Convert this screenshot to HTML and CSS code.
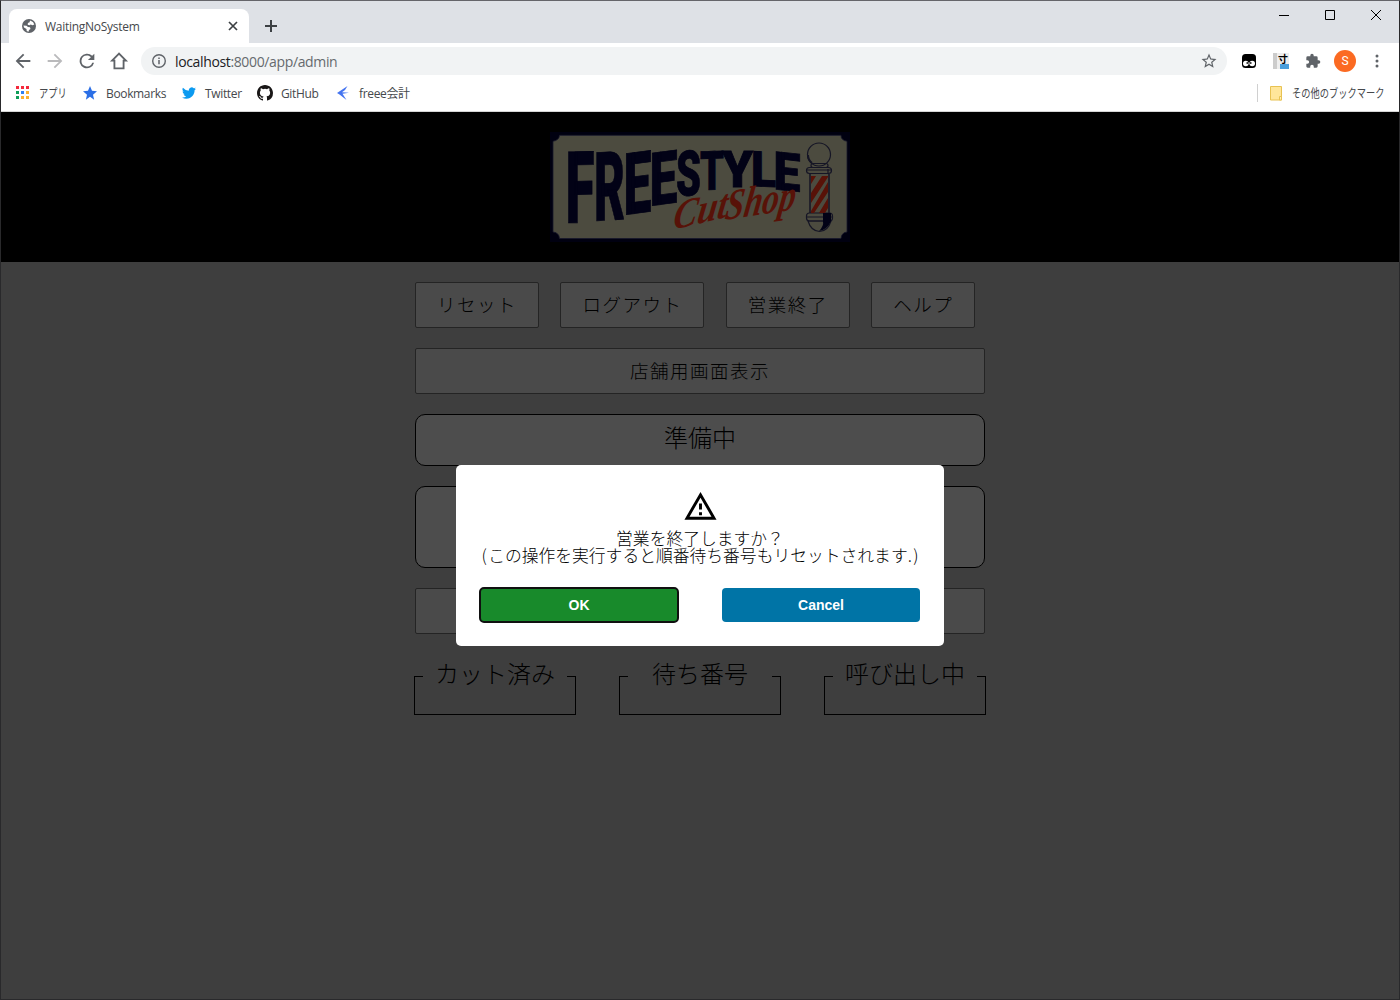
FILE: index.html
```html
<!DOCTYPE html>
<html lang="ja">
<head>
<meta charset="utf-8">
<title>WaitingNoSystem</title>
<link rel="stylesheet" href="styles.css">
</head>
<body>
<div class="window">
  <header class="titlebar">
    <div class="tab">
      <svg class="tab-icon" width="16" height="16" viewBox="0 0 16 16"><circle cx="8" cy="8" r="7" fill="#5f6368"/><path fill="#fff" d="M2.500 7.500l3 .3 1.500 1.200 2 .2.500 1.800-1.500 1-.5 1.700-1.800-.6L5.500 11 3 9.500zM9 2.500l3 1.500 1.300 2.500-1.800.8-1.800-.8-1.200.8-1.800-.5.200-1.800 1.700-.8z"/></svg>
      <span class="tab-title">WaitingNoSystem</span>
      <svg class="tab-close" width="10" height="10" viewBox="0 0 10 10"><path d="M1 1l8 8M9 1l-8 8" stroke="#3c4043" stroke-width="1.700"/></svg>
    </div>
    <svg class="new-tab" width="12" height="12" viewBox="0 0 12 12"><path d="M6 0v12M0 6h12" stroke="#3c4043" stroke-width="2"/></svg>
    <div class="window-controls">
      <svg width="11" height="11" viewBox="0 0 11 11"><path d="M0 5.500h10" stroke="#000"/></svg>
      <svg width="11" height="11" viewBox="0 0 11 11"><path d="M.5.500h9v9h-9z" fill="none" stroke="#000"/></svg>
      <svg width="11" height="11" viewBox="0 0 11 11"><path d="M0 0l10 10M10 0L0 10" stroke="#000"/></svg>
    </div>
  </header>

  <nav class="toolbar">
    <svg width="22" height="22" viewBox="0 0 24 24"><path fill="#5f6368" d="M20 11H7.830l5.590-5.590L12 4l-8 8 8 8 1.410-1.410L7.830 13H20z"/></svg>
    <svg width="22" height="22" viewBox="0 0 24 24"><path fill="#bababc" d="M12 4l-1.410 1.410L16.170 11H4v2h12.170l-5.580 5.590L12 20l8-8z"/></svg>
    <svg width="22" height="22" viewBox="0 0 24 24"><path fill="#5f6368" d="M17.650 6.350A8 8 0 1 0 19.730 14h-2.080A6 6 0 1 1 12 6c1.660 0 3.140.69 4.220 1.780L13 11h7V4z"/></svg>
    <svg width="22" height="22" viewBox="0 0 24 24"><path fill="none" stroke="#5f6368" stroke-width="2" d="M12 4l-7.500 7.500H7V20h10v-8.500h2.500z"/></svg>
    <div class="address">
      <svg width="16" height="16" viewBox="0 0 16 16"><circle cx="8" cy="8" r="6.300" fill="none" stroke="#5f6368" stroke-width="1.400"/><path d="M8 7v4.200M8 4.500v1.600" stroke="#5f6368" stroke-width="1.500"/></svg>
      <span class="url"><b>localhost</b>:8000/app/admin</span>
      <svg class="star" width="18" height="18" viewBox="0 0 24 24"><path fill="#5f6368" d="M22 9.240l-7.190-.62L12 2 9.190 8.630 2 9.240l5.460 4.730L5.820 21 12 17.270 18.180 21l-1.630-7.030zM12 15.400l-3.760 2.270 1-4.280-3.320-2.880 4.380-.38L12 6.100l1.710 4.040 4.380.38-3.320 2.880 1 4.280z"/></svg>
    </div>
    <div class="extensions">
      <svg width="16" height="16" viewBox="0 0 16 16"><rect x="1" y="1" width="14" height="14" rx="3.500" fill="#000"/><circle cx="4.800" cy="10.500" r="2.800" fill="#fff"/><circle cx="11.200" cy="10.500" r="2.800" fill="#fff"/><path d="M5.500 10h1.500M9 10h1.500" stroke="#000" stroke-width="1.500"/></svg>
      <span class="size-ext"><span class="size-glyph">寸</span></span>
      <svg width="16" height="16" viewBox="0 0 24 24"><path fill="#5f6368" d="M20.500 11H19V7a2 2 0 0 0-2-2h-4V3.500a2.500 2.500 0 0 0-5 0V5H4a2 2 0 0 0-2 2v3.800h1.500a2.700 2.700 0 0 1 0 5.400H2V20c0 1.100.9 2 2 2h3.800v-1.500a2.700 2.700 0 0 1 5.400 0V22H17a2 2 0 0 0 2-2v-4h1.500a2.500 2.500 0 0 0 0-5z"/></svg>
    </div>
    <span class="avatar">S</span>
    <svg class="kebab" width="4" height="14" viewBox="0 0 4 14"><g fill="#5f6368"><circle cx="2" cy="2" r="1.500"/><circle cx="2" cy="7" r="1.500"/><circle cx="2" cy="12" r="1.500"/></g></svg>
  </nav>

  <nav class="bookmarks">
    <a class="bm apps"><svg width="14" height="14" viewBox="0 0 14 14"><path fill="#f4293c" d="M0 0h3v3H0zM5 0h3v3H5zM10 0h3v3h-3z"/><path fill="#0f9d58" d="M0 5h3v3H0zM0 10h3v3H0z"/><path fill="#2f80f0" d="M5 5h3v3H5z"/><path fill="#fbb030" d="M10 5h3v3h-3zM5 10h3v3H5zM10 10h3v3h-3z"/></svg><span>アプリ</span></a>
    <a class="bm marks"><svg width="16" height="16" viewBox="0 0 24 24"><path fill="#2b6fe6" d="M12 17.800L18.200 22l-1.700-7.500L22.500 9.300l-7.500-.6L12 1.500 9 8.700l-7.500.6 6 5.200L5.800 22z"/></svg><span>Bookmarks</span></a>
    <a class="bm tw"><svg width="14" height="14" viewBox="0 0 24 24"><path fill="#0c9af0" d="M23.950 4.570a10 10 0 0 1-2.820.77 4.960 4.960 0 0 0 2.160-2.720c-.95.560-2 .96-3.130 1.190a4.920 4.920 0 0 0-8.380 4.480A13.900 13.900 0 0 1 1.640 3.160a4.920 4.920 0 0 0 1.520 6.570 4.900 4.900 0 0 1-2.230-.61v.06a4.920 4.920 0 0 0 3.950 4.830 5 5 0 0 1-2.210.08 4.940 4.940 0 0 0 4.600 3.420A9.870 9.870 0 0 1 0 19.540a14 14 0 0 0 7.550 2.210c9.050 0 14-7.500 14-13.980l-.02-.64a9.940 9.940 0 0 0 2.420-2.560z"/></svg><span>Twitter</span></a>
    <a class="bm gh"><svg width="16" height="16" viewBox="0 0 16 16"><path fill="#191717" d="M8 0C3.580 0 0 3.580 0 8c0 3.540 2.290 6.530 5.470 7.590.4.070.55-.17.55-.38 0-.19-.01-.82-.01-1.490-2.010.37-2.530-.49-2.690-.94-.09-.23-.48-.94-.82-1.130-.28-.15-.68-.52-.01-.53.63-.01 1.080.58 1.230.82.72 1.210 1.870.87 2.330.66.070-.52.280-.87.510-1.070-1.780-.2-3.640-.89-3.640-3.950 0-.87.310-1.590.82-2.150-.08-.2-.36-1.020.08-2.120 0 0 .67-.21 2.200.82a7.600 7.600 0 0 1 4 0c1.530-1.040 2.200-.82 2.200-.82.44 1.100.16 1.920.08 2.120.51.560.82 1.270.82 2.150 0 3.070-1.870 3.750-3.650 3.950.29.250.54.730.54 1.480 0 1.070-.01 1.930-.01 2.200 0 .21.150.46.550.38A8 8 0 0 0 16 8c0-4.420-3.580-8-8-8z"/></svg><span>GitHub</span></a>
    <a class="bm fr"><svg width="16" height="16" viewBox="0 0 16 16"><path fill="#4474f0" d="M2 8L12.500 1 10 5 7 7.200 14 7.700 7.500 8.800 11.500 15 4.500 9.600z"/></svg><span>freee会計</span></a>
    <a class="bm other"><svg width="12" height="15" viewBox="0 0 12 15"><path d="M.5.500h11v13.500H.5z" fill="#ffe69a" stroke="#e8c252"/><path d="M9.500 10.500h2V14h-2z" fill="#fff0b8" stroke="#e8c252"/></svg><span>その他のブックマーク</span></a>
  </nav>

  <main class="page">
    <header class="hero">
      <svg width="300" height="110" viewBox="10 12 300 110" role="img" aria-label="FREESTYLE Cut Shop">
        <rect x="10" y="12" width="300" height="110" fill="#000010"/>
        <path fill="#4c4b3f" stroke="#17172b" stroke-width=".8" d="M19.500 15.300H301q0 5 6 6V112q-5.500.5-6 6.500H19.500q-.5-6-6.500-6.500V21.300q6-1 6.500-6z"/>
        <g class="logo-name">
          <text transform="matrix(1 -.02 0 1 25.500 103)" font-size="100" textLength="29" lengthAdjust="spacingAndGlyphs">F</text>
          <text transform="matrix(1 -.06 0 1 54 101)" font-size="96" textLength="31" lengthAdjust="spacingAndGlyphs">R</text>
          <text transform="matrix(1 -.13 0 1 83.500 95)" font-size="86" textLength="28" lengthAdjust="spacingAndGlyphs">E</text>
          <text transform="matrix(1 -.13 0 1 109.500 86)" font-size="74" textLength="28" lengthAdjust="spacingAndGlyphs">E</text>
          <text transform="matrix(1 -.08 0 1 136 76.500)" font-size="63" textLength="25" lengthAdjust="spacingAndGlyphs">S</text>
          <text transform="matrix(1 -.03 0 1 160 70)" font-size="54" textLength="24" lengthAdjust="spacingAndGlyphs">T</text>
          <text transform="matrix(1 0 0 1 182 66.500)" font-size="49.500" textLength="31" lengthAdjust="spacingAndGlyphs">Y</text>
          <text transform="matrix(1 .04 0 1 211 66)" font-size="49" textLength="25" lengthAdjust="spacingAndGlyphs">L</text>
          <text transform="matrix(1 .11 0 1 233.500 69)" font-size="53" textLength="27" lengthAdjust="spacingAndGlyphs">E</text>
        </g>
        <g class="logo-script">
          <text transform="matrix(1 -.24 -.15 1 132 110)" font-size="42" textLength="54" lengthAdjust="spacingAndGlyphs">Cut</text>
          <text transform="matrix(1 -.15 -.15 1 184 100)" font-size="44" textLength="70" lengthAdjust="spacingAndGlyphs">Shop</text>
        </g>
        <g fill="none" stroke="#151525" stroke-width="1.200">
          <circle cx="279" cy="34.500" r="11.500"/>
          <path d="M268 35q0 5 4 8" stroke-width="2"/>
          <rect x="271" y="43.500" width="17" height="4" rx="2"/>
          <rect x="266.500" y="47.500" width="25" height="6" rx="3"/>
          <path d="M267 50h24M288 49v4"/>
          <path d="M270 54v39M289 54v39" stroke-width="1.500"/>
          <rect x="266.500" y="93" width="26" height="8" rx="3"/>
          <path d="M267 97h25M268 101q3 10 11.500 10.500Q288 111 291 101z"/>
        </g>
        <path d="M283 93h8v8q-4 9-12 10 5-5 4-10z" fill="#020216"/>
        <path d="M271 56h5l-5 8zM282 56h6v1l-17 26V73zM288 62v10l-14 21h-3v-2zM288 78v10l-3 5h-6z" fill="#581208"/>
      </svg>
    </header>

    <div class="admin">
      <div class="actions">
        <button class="btn w4">リセット</button>
        <button class="btn w5">ログアウト</button>
        <button class="btn w4">営業終了</button>
        <button class="btn w3">ヘルプ</button>
      </div>
      <button class="btn">店舗用画面表示</button>
      <div class="panel status">準備中</div>
      <div class="panel counter"></div>
      <div class="btn"></div>
      <div class="groups">
        <fieldset><legend>カット済み</legend></fieldset>
        <fieldset><legend class="wide">待ち番号</legend></fieldset>
        <fieldset><legend>呼び出し中</legend></fieldset>
      </div>
    </div>
  </main>

  <div class="modal">
    <svg class="warning" width="35" height="35" viewBox="0 0 24 24"><path d="M12 5.990L19.530 19H4.470L12 5.990M12 2L1 21h22L12 2zm1 14h-2v2h2v-2zm0-6h-2v4h2v-4z"/></svg>
    <p>営業を終了しますか？<br><span class="paren">(</span>この操作を実行すると順番待ち番号もリセットされます.<span class="paren">)</span></p>
    <div class="modal-actions">
      <button class="ok">OK</button>
      <button class="cancel">Cancel</button>
    </div>
  </div>
</div>
</body>
</html>
```
FILE: styles.css
```css
* { box-sizing: border-box; }
body {
  margin: 0;
  font-family: "Noto Sans CJK JP", sans-serif;
  overflow: hidden;
}
svg { display: block; flex: none; }
button { font: inherit; cursor: pointer; }

.window {
  position: relative;
  width: 1400px;
  height: 1000px;
  display: flex;
  flex-direction: column;
  border: 1px solid #29292b;
  border-top-color: #65656a;
  background: #fff;
}

/* Browser chrome */
.titlebar {
  height: 42px;
  flex: none;
  display: flex;
  background: #dee1e6;
  padding: 8px 13px 0 8px;
}
.tab {
  width: 240px;
  display: flex;
  align-items: center;
  background: #fff;
  border-radius: 8px 8px 0 0;
  padding: 0 11px 0 12px;
}
.tab-title {
  margin-left: 8px;
  font: 12px "Open Sans", "Noto Sans", sans-serif;
  letter-spacing: -.27px;
  color: #45484c;
}
.tab-close { margin-left: auto; }
.new-tab { margin: 11px 0 0 16px; }
.window-controls { margin: 1px 4px 0 auto; display: flex; gap: 35px; }

.toolbar {
  height: 36px;
  flex: none;
  display: flex;
  align-items: center;
  padding: 0 19px 0 11px;
  gap: 10px;
}
.address {
  width: 1086px;
  height: 28px;
  display: flex;
  align-items: center;
  margin-left: 1px;
  border-radius: 14px;
  background: #f1f3f4;
  padding: 0 9px 0 10px;
}
.url {
  margin-left: 8px;
  font: 14px "Open Sans", "Noto Sans", sans-serif;
  letter-spacing: -.36px;
  color: #666a6e;
}
.url b { font-weight: 400; color: #202124; }
.star { margin-left: auto; }
.extensions { display: flex; gap: 16px; margin-left: 4px; }
.size-ext {
  width: 16px;
  height: 16px;
  background: linear-gradient(#4a9edb, #4a9edb) 7px 11px / 9px 5px no-repeat, linear-gradient(90deg, #ccc 4px, #eee 4px);
}
.size-glyph { display: block; padding-left: 5px; font-size: 10px; line-height: 11px; font-weight: 700; }
.avatar {
  width: 22px;
  height: 22px;
  margin-left: 3px;
  border-radius: 50%;
  background: #fb6a22;
  color: #fff;
  font: 12px/22px Roboto, sans-serif;
  text-align: center;
}
.kebab { margin-left: 9px; }

.bookmarks {
  height: 33px;
  flex: none;
  display: flex;
  align-items: center;
  padding: 0 14px 4px 15px;
  border-bottom: 1px solid #d5d5d5;
}
.bm {
  display: flex;
  align-items: center;
  font: 12px/16px "Open Sans", "Noto Sans CJK JP", sans-serif;
  letter-spacing: -.35px;
  color: #45484c;
  white-space: nowrap;
}
.bm span { margin-left: 8px; padding-top: 2px; }
.bm.apps span, .bm.other span {
  letter-spacing: 0;
  transform: scaleX(.77);
  transform-origin: left;
}
.apps { width: 66px; }
.apps span { margin-left: 9px; }
.marks { width: 100px; }
.tw { width: 75px; }
.tw span { margin-left: 9px; }
.gh { width: 78px; }
.other {
  margin-left: auto;
  border-left: 1px solid #d0d0d0;
  padding-left: 12px;
}
.bm.other span { margin-left: 10px; margin-right: -27px; }

/* Page behind the dialog */
.page { flex: 1; background: #3e3e3e; }
.hero {
  height: 150px;
  display: flex;
  justify-content: center;
  padding-top: 20px;
  background: #000;
}
.logo-name {
  font-family: Roboto, sans-serif;
  font-weight: 900;
  fill: #020216;
  stroke: #020216;
  stroke-width: .8;
}
.logo-script {
  font-family: "Liberation Serif", serif;
  font-style: italic;
  font-weight: 700;
  fill: #581208;
}
.logo-name text, .logo-script text { overflow: visible; }
.admin {
  width: 570px;
  margin: 20px auto 0;
  display: flex;
  flex-direction: column;
  gap: 20px;
}
.actions { display: flex; gap: 21.400px; }
.btn {
  height: 46px;
  padding: 0 0 2px;
  border: 1px solid #242424;
  border-radius: 2px;
  background: #4a4a4a;
  color: #000;
  font-size: 18.500px;
  font-weight: 300;
  letter-spacing: 1.500px;
}
.w5 { width: 144px; }
.w4 { width: 124px; }
.w3 { width: 104px; }
.panel {
  border: 1px solid #000;
  border-radius: 10px;
  background: #4d4d4d;
  font-size: 24px;
  font-weight: 300;
  text-align: center;
}
.status { height: 52px; line-height: 44px; }
.counter { height: 82px; }
.groups {
  display: flex;
  justify-content: space-between;
  margin: 3px -1px 0;
}
fieldset {
  width: 162px;
  height: 58px;
  margin: 0;
  padding: 0 8px;
  border: 1px solid #000;
}
legend {
  height: 39px;
  padding: 0 12px;
  font-size: 24px;
  line-height: 32px;
  font-weight: 300;
  white-space: nowrap;
}
.wide { padding: 0 24px; }

.modal {
  position: absolute;
  left: 455px;
  top: 464px;
  width: 488px;
  height: 181px;
  padding: 24px 24px 23px;
  border-radius: 5px;
  background: #fff;
  text-align: center;
}
.warning { margin: 0 auto; }
.modal p {
  margin: 6px -10px 0;
  font-size: 16.800px;
  line-height: 16.500px;
  font-weight: 300;
  white-space: nowrap;
}
.paren { display: inline-block; width: 8px; }
.modal-actions {
  display: flex;
  justify-content: space-between;
  margin-top: 25px;
}
.modal-actions button {
  width: 198px;
  height: 34px;
  padding: 0;
  border: 0;
  border-radius: 4px;
  color: #fff;
  font: bold 14px "Liberation Sans", Arial, sans-serif;
}
.modal-actions .ok { background: #188a2b; outline: 2px solid #101010; outline-offset: -1px; }
.modal-actions .cancel { background: #0074a6; }
```
